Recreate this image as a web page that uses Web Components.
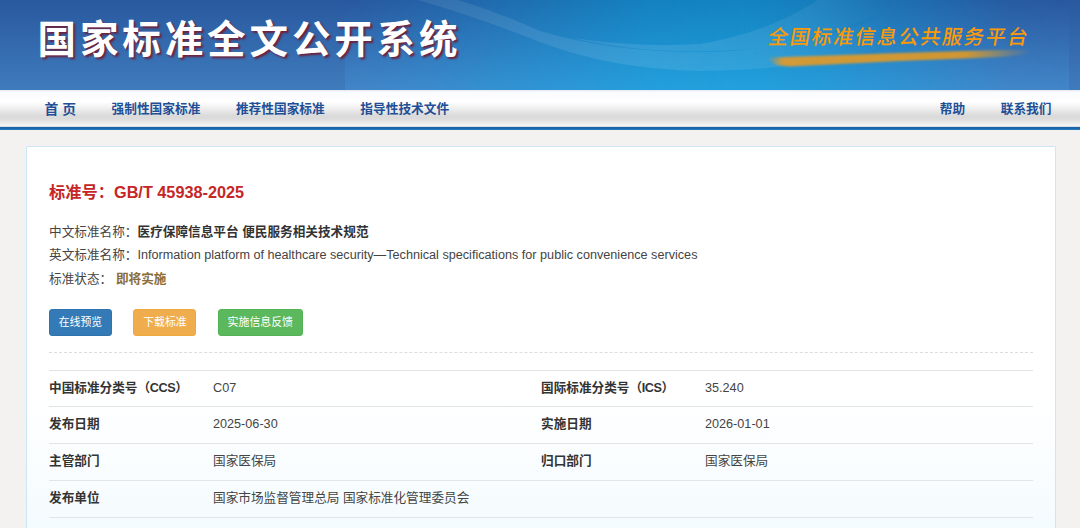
<!DOCTYPE html>
<html lang="zh-CN">
<head>
  <meta charset="UTF-8">
  <title>国家标准全文公开系统</title>
  <style>
    body {
      margin: 0;
      height: 528px;
      overflow: hidden;
      background-color: #f4f2f0;
      color: #333;
      font-family: "Liberation Sans", "Noto Sans CJK SC", sans-serif;
      font-size: 12.65px;
    }

    .code {
      letter-spacing: -0.4px;
    }
  </style>
</head>
<body>
  <site-banner>
    国家标准全文公开系统
    <span slot="platform">全国标准信息公共服务平台</span>
  </site-banner>

  <site-nav>
    <nav-item home>首 页</nav-item>
    <nav-item>强制性国家标准</nav-item>
    <nav-item>推荐性国家标准</nav-item>
    <nav-item>指导性技术文件</nav-item>
    <nav-item slot="right">帮助</nav-item>
    <nav-item slot="right">联系我们</nav-item>
  </site-nav>

  <standard-card>
    <span slot="title">标准号：GB/T 45938-2025</span>
    <info-line label="中文标准名称："><b>医疗保障信息平台 便民服务相关技术规范</b></info-line>
    <info-line label="英文标准名称：">Information platform of healthcare security—Technical specifications for public convenience services</info-line>
    <info-line label="标准状态：" status>即将实施</info-line>
    <action-button slot="actions" type="primary">在线预览</action-button>
    <action-button slot="actions" type="warning">下载标准</action-button>
    <action-button slot="actions" type="success">实施信息反馈</action-button>
    <detail-row slot="details">
      <span slot="label">中国标准分类号<span class="code">（CCS）</span></span><span slot="value">C07</span>
      <span slot="label2">国际标准分类号<span class="code">（ICS）</span></span><span slot="value2">35.240</span>
    </detail-row>
    <detail-row slot="details">
      <span slot="label">发布日期</span><span slot="value">2025-06-30</span>
      <span slot="label2">实施日期</span><span slot="value2">2026-01-01</span>
    </detail-row>
    <detail-row slot="details">
      <span slot="label">主管部门</span><span slot="value">国家医保局</span>
      <span slot="label2">归口部门</span><span slot="value2">国家医保局</span>
    </detail-row>
    <detail-row slot="details">
      <span slot="label">发布单位</span><span slot="value">国家市场监督管理总局 国家标准化管理委员会</span>
    </detail-row>
  </standard-card>

  <script>
    class SiteBanner extends HTMLElement {
      constructor() {
        super();
        this.shadowDOM = this.attachShadow({ mode: 'open' });
      }

      connectedCallback() {
        this.render();
      }

      render() {
        this.shadowDOM.innerHTML = `
        <style>
        :host {
            display: block;
            position: relative;
            height: 90px;
            overflow: hidden;
        }

        .art {
            position: absolute;
            inset: 0;
        }

        .content {
            position: relative;
            display: flex;
            justify-content: space-between;
            box-sizing: border-box;
            height: 90px;
            padding: 12px 53px 0 37.500px;
        }

        h1 {
            margin: 0;
            font-size: 38.500px;
            line-height: 56px;
            font-weight: 700;
            letter-spacing: 3.900px;
            color: #fff;
            text-shadow: 2px 2px 2px #6b2340;
            white-space: nowrap;
        }

        .platform {
            padding-top: 8px;
            font-size: 20px;
            line-height: 34px;
            font-weight: 500;
            letter-spacing: 1.750px;
            color: #fa9a08;
            transform: skewX(-10deg);
            white-space: nowrap;
        }
        </style>

        <svg class="art" width="1080" height="90" viewBox="0 0 1080 90">
            <defs>
                <linearGradient id="base" x1="0" y1="0" x2="0" y2="1">
                    <stop offset="0" stop-color="#29589e"/>
                    <stop offset="1" stop-color="#3f7cbd"/>
                </linearGradient>
                <linearGradient id="panel" x1="0" y1="0" x2="0" y2="1">
                    <stop offset="0" stop-color="#29589f"/>
                    <stop offset="1" stop-color="#4386c9"/>
                </linearGradient>
                <linearGradient id="glow" x1="0" y1="0" x2="0" y2="1">
                    <stop offset="0" stop-color="#1384c1"/>
                    <stop offset="1" stop-color="#22a1de"/>
                </linearGradient>
                <linearGradient id="fade" x1="0" y1="0" x2="1" y2="0">
                    <stop offset="0" stop-color="#000"/>
                    <stop offset="0.12" stop-color="#3c3c3c"/>
                    <stop offset="0.42" stop-color="#eee"/>
                    <stop offset="0.55" stop-color="#fff"/>
                    <stop offset="0.66" stop-color="#d0d0d0"/>
                    <stop offset="0.92" stop-color="#111"/>
                    <stop offset="1" stop-color="#000"/>
                </linearGradient>
                <mask id="glowMask">
                    <rect x="345" width="724" height="90" fill="url(#fade)"/>
                </mask>
                <linearGradient id="swoosh" gradientUnits="userSpaceOnUse" x1="410" y1="0" x2="890" y2="0">
                    <stop offset="0" stop-color="#fff" stop-opacity="0.08"/>
                    <stop offset="0.5" stop-color="#fff" stop-opacity="0.1"/>
                    <stop offset="0.75" stop-color="#fff" stop-opacity="0.08"/>
                    <stop offset="1" stop-color="#fff" stop-opacity="0"/>
                </linearGradient>
                <linearGradient id="brush" x1="0" y1="0" x2="1" y2="0">
                    <stop offset="0" stop-color="#d69a30" stop-opacity="0"/>
                    <stop offset="0.06" stop-color="#d29a38"/>
                    <stop offset="0.75" stop-color="#d8982a" stop-opacity="0.95"/>
                    <stop offset="1" stop-color="#d69a30" stop-opacity="0"/>
                </linearGradient>
                <filter id="soft"><feGaussianBlur stdDeviation="0.8"/></filter>
            </defs>
            <rect width="1080" height="90" fill="url(#base)"/>
            <rect x="345" width="724" height="90" fill="url(#panel)"/>
            <rect x="345" width="724" height="90" fill="url(#glow)" mask="url(#glowMask)"/>
            <path d="M418 0 H458 Q498 12 540 31 Q610 52 700 52 Q790 52 890 15 V45 Q800 71 700 71 Q610 69 540 42 Q480 18 418 0Z" fill="url(#swoosh)"/>
            <path d="M572 38 Q640 48 700 44 Q770 32 818 0 H900 Q840 38 760 48 Q660 58 572 38Z" fill="url(#swoosh)"/>
            <path d="M767 58 L785 57 L900 53 L1000 50 L1030 49.500 L1031 54 L1000 57 L900 61 L790 66.500 L776 65Z" fill="url(#brush)" filter="url(#soft)"/>
        </svg>
        <div class="content">
            <h1><slot></slot></h1>
            <div class="platform"><slot name="platform"></slot></div>
        </div>
        `;
      }
    }

    class SiteNav extends HTMLElement {
      constructor() {
        super();
        this.shadowDOM = this.attachShadow({ mode: 'open' });
      }

      connectedCallback() {
        this.render();
      }

      render() {
        this.shadowDOM.innerHTML = `
        <style>
        :host {
            display: flex;
            justify-content: space-between;
            box-sizing: border-box;
            height: 40px;
            padding: 1px 28.500px 3px 44.500px;
            background:
                linear-gradient(#1f5f9e, #1769b0 50%, #2e7fc0) bottom / 100% 3px no-repeat,
                linear-gradient(#e2e6ee 0, #fafbff 2px, #fff 12px, #f2f2f2 17px, #dadada 26px, #dcdcdc 29px, #f6f6f6 36px, #b8cad8 37px);
        }

        nav {
            display: flex;
            gap: 35.600px;
        }
        </style>
        <nav><slot></slot></nav>
        <nav><slot name="right"></slot></nav>
        `;
      }
    }

    class NavItem extends HTMLElement {
      constructor() {
        super();
        this.shadowDOM = this.attachShadow({ mode: 'open' });
      }

      connectedCallback() {
        this.render();
      }

      render() {
        this.shadowDOM.innerHTML = `
        <style>
        :host {
            display: block;
            font-size: 12.700px;
            line-height: 36px;
            font-weight: 700;
            color: #1f4f96;
            white-space: nowrap;
        }
        :host([home]) {
            font-size: 13.800px;
            line-height: 37px;
        }
        </style>
        <slot></slot>
        `;
      }
    }

    class StandardCard extends HTMLElement {
      constructor() {
        super();
        this.shadowDOM = this.attachShadow({ mode: 'open' });
      }

      connectedCallback() {
        this.render();
      }

      render() {
        this.shadowDOM.innerHTML = `
        <style>
        :host {
            display: block;
            box-sizing: border-box;
            height: 382px;
            margin: 16px 24px 0 26px;
            padding: 33px 22px 0 22px;
            border: 1px solid #cbe7f5;
            border-bottom: none;
            border-radius: 2px 2px 0 0;
            background: linear-gradient(#fff 0, #fff 250px, #f4fbfe 381px);
        }

        h2 {
            margin: 0 0 17px;
            font-size: 16.250px;
            line-height: 24px;
            font-weight: 700;
            color: #c62626;
        }

        .actions {
            display: flex;
            gap: 21.500px;
            margin-top: 17.500px;
            padding-bottom: 16px;
            border-bottom: 1px dashed #ddd;
        }

        .details {
            margin-top: 17px;
            border-bottom: 1px solid #e2e5e6;
        }
        </style>
        <h2><slot name="title"></slot></h2>
        <slot></slot>
        <div class="actions"><slot name="actions"></slot></div>
        <div class="details"><slot name="details"></slot></div>
        `;
      }
    }

    class InfoLine extends HTMLElement {
      constructor() {
        super();
        this.shadowDOM = this.attachShadow({ mode: 'open' });
      }

      connectedCallback() {
        this.render();
      }

      render() {
        this.shadowDOM.innerHTML = `
        <style>
        :host {
            display: flex;
            line-height: 23.400px;
            color: #444;
            white-space: nowrap;
        }
        ::slotted(b) {
            color: #333;
        }
        :host([status]) .value {
            margin-left: 3.700px;
            font-weight: 700;
            color: #8a6d3b;
        }
        </style>
        <span>${this.getAttribute('label')}</span>
        <span class="value"><slot></slot></span>
        `;
      }
    }

    class ActionButton extends HTMLElement {
      constructor() {
        super();
        this.shadowDOM = this.attachShadow({ mode: 'open' });
      }

      connectedCallback() {
        this.render();
      }

      render() {
        this.shadowDOM.innerHTML = `
        <style>
        :host {
            display: block;
        }

        button {
            display: block;
            box-sizing: border-box;
            height: 27px;
            padding: 0 8.700px;
            border: 1px solid;
            border-radius: 3px;
            font-family: inherit;
            font-size: 10.900px;
            line-height: 25px;
            color: #fff;
        }
        .primary {
            background-color: #337ab7;
            border-color: #3074af;
        }
        .warning {
            background-color: #f0ad4e;
            border-color: #efa840;
        }
        .success {
            background-color: #5cb85c;
            border-color: #54b354;
        }
        </style>
        <button class="${this.getAttribute('type')}"><slot></slot></button>
        `;
      }
    }

    class DetailRow extends HTMLElement {
      constructor() {
        super();
        this.shadowDOM = this.attachShadow({ mode: 'open' });
      }

      connectedCallback() {
        this.render();
      }

      render() {
        this.shadowDOM.innerHTML = `
        <style>
        :host {
            display: grid;
            grid-template-columns: 1fr 2fr 1fr 2fr;
            box-sizing: border-box;
            height: 36.750px;
            border-top: 1px solid #e2e5e6;
            line-height: 34.500px;
            white-space: nowrap;
        }
        .label {
            font-weight: 700;
        }
        .value {
            color: #444;
        }
        </style>
        <div class="label"><slot name="label"></slot></div>
        <div class="value"><slot name="value"></slot></div>
        <div class="label"><slot name="label2"></slot></div>
        <div class="value"><slot name="value2"></slot></div>
        `;
      }
    }

    customElements.define('site-banner', SiteBanner);
    customElements.define('site-nav', SiteNav);
    customElements.define('nav-item', NavItem);
    customElements.define('standard-card', StandardCard);
    customElements.define('info-line', InfoLine);
    customElements.define('action-button', ActionButton);
    customElements.define('detail-row', DetailRow);
  </script>
</body>
</html>
